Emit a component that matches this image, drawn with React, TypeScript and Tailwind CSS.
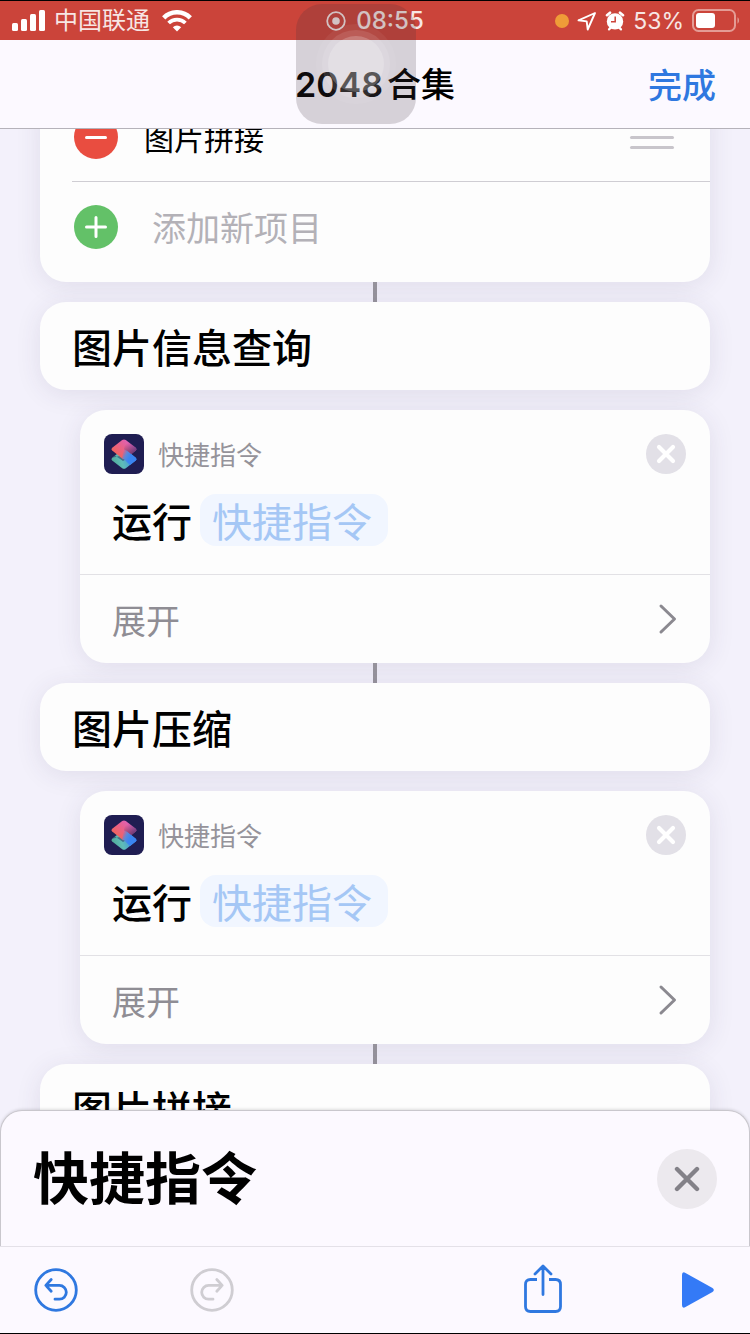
import { useState } from 'react'

const ACTIONS = ['图片信息查询', '图片压缩']

const CARD = 'rounded-[26px] bg-[#fdfdfd] shadow-[0_4px_26px_rgba(60,50,90,0.10)]'

function SignalIcon() {
  return (
    <svg width="34" height="22" viewBox="0 0 34 22" fill="#fff" aria-hidden="true">
      <rect x="0" y="13" width="6" height="8" rx="1.5" />
      <rect x="9" y="9" width="6" height="12" rx="1.5" />
      <rect x="18" y="4" width="6" height="17" rx="1.5" />
      <rect x="27" y="0" width="6" height="21" rx="1.5" />
    </svg>
  )
}

function WifiIcon() {
  return (
    <svg width="30" height="22" viewBox="0 0 30 22" fill="none" stroke="#fff" strokeWidth="4.6" aria-hidden="true">
      <path d="M1.7 7.8a18.8 18.8 0 0 1 26.6 0" />
      <path d="M6.600 13a12 12 0 0 1 16.800 0" strokeWidth="3.800" />
      <path d="M15 21.600l-4.200-4.300a6 6 0 0 1 8.400 0z" fill="#fff" stroke="none" />
    </svg>
  )
}

function RecordIcon() {
  return (
    <svg width="20" height="20" viewBox="0 0 20 20" aria-hidden="true">
      <circle cx="10" cy="10" r="8.8" fill="none" stroke="#f7e6e4" strokeWidth="1.8" />
      <circle cx="10" cy="10" r="3.8" fill="#f7e6e4" />
    </svg>
  )
}

function LocationIcon() {
  return (
    <svg width="20" height="20" viewBox="0 0 20 20" fill="none" stroke="#fff" strokeWidth="1.9" strokeLinejoin="round" aria-hidden="true">
      <path d="M18 2L1.5 9.3l8.2 1.1 1 8.1z" />
    </svg>
  )
}

function AlarmIcon() {
  return (
    <svg width="20" height="20" viewBox="0 0 20 20" aria-hidden="true">
      <g stroke="#fff" strokeWidth="2.6" strokeLinecap="round">
        <path d="M2 4.2L5 1.7M18 4.2L15 1.7" />
        <path d="M4 18.4l2-2M16 18.4l-2-2" strokeWidth="2.2" />
      </g>
      <circle cx="10" cy="10.4" r="8.2" fill="#fff" />
      <path d="M10.2 5.6v5.2H6" fill="none" stroke="#cc443a" strokeWidth="1.5" />
    </svg>
  )
}

function BatteryIcon() {
  return (
    <svg width="48" height="24" viewBox="0 0 48 24" aria-hidden="true">
      <rect x="1" y="1" width="42" height="21" rx="5.5" fill="none" stroke="#e49c95" strokeWidth="2" />
      <rect x="4" y="4" width="19" height="15" rx="3" fill="#fff" />
      <path d="M45.5 8.3c2 1.2 2 5.2 0 6.4z" fill="#e49c95" />
    </svg>
  )
}

function ShortcutsIcon() {
  return (
    <svg width="40" height="40" viewBox="0 0 40 40" aria-hidden="true">
      <defs>
        <linearGradient id="lower" gradientUnits="userSpaceOnUse" x1="8" y1="30" x2="32" y2="22">
          <stop offset="0" stopColor="#4fa896" />
          <stop offset="0.4" stopColor="#5fbcb8" />
          <stop offset="1" stopColor="#2f7bf0" />
        </linearGradient>
        <linearGradient id="upper" gradientUnits="userSpaceOnUse" x1="11" y1="19" x2="24" y2="5">
          <stop offset="0" stopColor="#f0645e" />
          <stop offset="0.5" stopColor="#e8608c" />
          <stop offset="1" stopColor="#dc62bc" />
        </linearGradient>
        <linearGradient id="shade" gradientUnits="userSpaceOnUse" x1="22" y1="10" x2="29" y2="20">
          <stop offset="0" stopColor="#3a2a66" stopOpacity="0" />
          <stop offset="1" stopColor="#3a2a66" stopOpacity="0.75" />
        </linearGradient>
        <linearGradient id="front" gradientUnits="userSpaceOnUse" x1="18" y1="19" x2="26" y2="23">
          <stop offset="0" stopColor="#6a80c8" stopOpacity="0" />
          <stop offset="0.5" stopColor="#5f88d8" />
          <stop offset="1" stopColor="#3a84f0" />
        </linearGradient>
      </defs>
      <rect width="40" height="40" rx="8" fill="#1f1d52" />
      <path d="M18.200 15.800q1.800-1.300 3.600 0l10 8q1.600 1.400 0 2.800l-10 7.600q-1.800 1.300-3.600 0l-10-7.600q-1.600-1.400 0-2.800z" fill="url(#lower)" />
      <path d="M8.200 23.800L11 21.500l8 5.500 5-3-4-3z" fill="#1f1d52" opacity="0.45" />
      <path d="M18.200 6.100q1.800-1.300 3.600 0l10 7.600q1.600 1.400 0 2.800l-10 8q-1.800 1.300-3.600 0l-10-8q-1.600-1.400 0-2.800z" fill="url(#upper)" />
      <path d="M21.800 6.100l10 7.600q1.600 1.400 0 2.800L27 20.300l-7-5z" fill="url(#shade)" />
      <path d="M20 15.200q1 0 1.800.6l10 8q1.600 1.400 0 2.800L26 31l-6-5.800-2-1z" fill="url(#front)" />
    </svg>
  )
}

function CircleArrow({ redo }: { redo?: boolean }) {
  return (
    <svg width="44" height="44" viewBox="0 0 44 44" fill="none" stroke="currentColor" strokeWidth="2.8" strokeLinecap="round" strokeLinejoin="round" aria-hidden="true">
      <circle cx="22" cy="22" r="20.3" />
      {redo ? (
        <path d="M26.8 11.5l5.4 5.900-5.400 5.900M32 17.400H18.600a6.900 6.900 0 0 0 0 13.800H23" />
      ) : (
        <path d="M17.200 11.500l-5.400 5.900 5.400 5.900M12 17.400h13.400a6.900 6.900 0 0 1 0 13.800H21" />
      )}
    </svg>
  )
}

function StatusBar() {
  return (
    <div className="grid h-10 shrink-0 grid-cols-[1fr_auto_1fr] items-center border-t border-black bg-[#cb443a] font-['Inter','Noto_Sans_CJK_SC',sans-serif] text-2xl leading-6 text-[#f7e6e4]">
      <div className="flex items-center gap-2 pl-3">
        <SignalIcon />
        <span className="mr-1">中国联通</span>
        <WifiIcon />
      </div>
      <div className="flex items-center gap-2.5">
        <RecordIcon />
        <span className="font-medium">08:55</span>
      </div>
      <div className="flex items-center justify-end gap-2 pr-2.5">
        <span className="size-3.5 rounded-full bg-[#ef9c38]" />
        <LocationIcon />
        <AlarmIcon />
        <span className="text-[23px]">53%</span>
        <BatteryIcon />
      </div>
    </div>
  )
}

function AssistiveTouch() {
  return (
    <div className="pointer-events-none absolute inset-x-0 top-1 z-20 flex justify-center pr-[38px]">
      <div className="flex size-[120px] items-center justify-center rounded-[26px] bg-[#40303a]/20">
        <div className="flex size-20 items-center justify-center rounded-full bg-white/5">
          <div className="flex size-[68px] items-center justify-center rounded-full bg-white/10">
            <div className="size-14 rounded-full bg-white/20" />
          </div>
        </div>
      </div>
    </div>
  )
}

function Connector() {
  return <div className="mx-auto h-5 w-1 bg-[#96939c]" />
}

function MenuTitle({ title }: { title: string }) {
  return (
    <div className={`${CARD} flex h-[88px] items-center px-8`}>
      <h2 className="text-[40px] leading-[56px] font-medium">{title}</h2>
    </div>
  )
}

function RunShortcutCard() {
  return (
    <div className={`${CARD} mt-5 ml-10`}>
      <div className="flex items-center px-6 pt-6">
        <ShortcutsIcon />
        <span className="ml-3.5 text-[26px] leading-10 text-[#95939a]">快捷指令</span>
        <button aria-label="删除" className="ml-auto flex size-10 items-center justify-center rounded-full bg-[#e2e0e7]">
          <svg width="20" height="20" viewBox="0 0 20 20" stroke="#fff" strokeWidth="4.2" strokeLinecap="round" aria-hidden="true">
            <path d="M3 3l14 14M17 3L3 17" />
          </svg>
        </button>
      </div>
      <div className="flex items-center gap-2 px-8 pt-5 pb-7 text-[40px] leading-[52px]">
        <span className="font-medium">运行</span>
        <button className="rounded-2xl bg-[#f1f6ff] pr-4 pl-3 text-[#a5c7f5]">快捷指令</button>
      </div>
      <button className="flex h-[89px] w-full items-center justify-between border-t border-[#e2e1e5] px-8 text-[34px] text-[#8f8d94]">
        <span>展开</span>
        <svg width="20" height="32" viewBox="0 0 20 32" fill="none" stroke="#8b8990" strokeWidth="3" strokeLinecap="round" strokeLinejoin="round" aria-hidden="true">
          <path d="M3 3l13.5 13L3 29" />
        </svg>
      </button>
    </div>
  )
}

export default function App() {
  const [item, setItem] = useState('图片拼接')
  const [newItem, setNewItem] = useState('')

  return (
    <div className="relative flex h-screen flex-col overflow-hidden border-b border-black bg-[#fcf9ff] font-['Noto_Sans_CJK_SC',sans-serif] text-black">
      <StatusBar />
      <AssistiveTouch />

      <header className="grid h-[89px] shrink-0 grid-cols-[1fr_auto_1fr] items-center border-b border-[#b5b2ba] px-[34px] text-[34px] leading-[48px]">
        <h1 className="col-start-2 font-medium">
          <span className="mr-1 font-['Inter',sans-serif] font-semibold">2048</span>合集
        </h1>
        <button className="justify-self-end font-medium text-[#2f78e0]">完成</button>
      </header>

      <main className="min-h-0 flex-1 overflow-hidden bg-[#f3f1fb] px-10">
        {/* menu items, scrolled under the header */}
        <section className={`${CARD} -mt-9 pb-2.5 pl-8`}>
          <div className="flex h-[89px] items-center border-b border-[#cfcdd3]">
            <button aria-label="移除" className="ml-0.5 flex size-11 items-center justify-center rounded-full bg-[#e94d40]">
              <span className="h-[3px] w-[22px] rounded-full bg-white" />
            </button>
            <input
              aria-label="项目"
              value={item}
              onChange={e => setItem(e.target.value)}
              className="ml-[26px] min-w-0 flex-1 text-3xl leading-10 outline-none"
            />
            <div className="mr-9 flex w-11 flex-col gap-[7px]">
              <span className="h-[3px] rounded-full bg-[#c8c5cb]" />
              <span className="h-[3px] rounded-full bg-[#c8c5cb]" />
              <span className="h-[3px] rounded-full bg-[#c8c5cb]" />
            </div>
          </div>
          <div className="flex h-[90px] items-center">
            <button aria-label="添加" className="ml-0.5 flex size-11 items-center justify-center rounded-full bg-[#63c168]">
              <svg width="22" height="22" viewBox="0 0 22 22" stroke="#fff" strokeWidth="3" strokeLinecap="round" aria-hidden="true">
                <path d="M11 1.5v19M1.500 11h19" />
              </svg>
            </button>
            <input
              aria-label="新项目"
              placeholder="添加新项目"
              value={newItem}
              onChange={e => setNewItem(e.target.value)}
              className="ml-[34px] min-w-0 flex-1 text-[34px] leading-[48px] outline-none placeholder:text-[#b3b1b7]"
            />
          </div>
        </section>

        {ACTIONS.map(title => (
          <div key={title}>
            <Connector />
            <MenuTitle title={title} />
            <RunShortcutCard />
          </div>
        ))}
        <Connector />
        <MenuTitle title="图片拼接" />
      </main>

      {/* action drawer, its round corners lie over the list */}
      <section className="relative -mt-6 flex h-[136px] shrink-0 items-center justify-between rounded-t-[22px] border border-b-0 border-[#c9c7cd] bg-[#fcf9ff] px-8 shadow-[0_-1px_3px_rgba(0,0,0,0.12)]">
        <h2 className="pb-2 text-[56px] leading-[72px] font-bold">快捷指令</h2>
        <button aria-label="关闭" className="flex size-15 items-center justify-center rounded-full bg-[#ece9ee]">
          <svg width="26" height="26" viewBox="0 0 26 26" stroke="#838188" strokeWidth="4.400" strokeLinecap="round" aria-hidden="true">
            <path d="M3 3l20 20M23 3L3 23" />
          </svg>
        </button>
      </section>

      <footer className="relative flex h-[87px] shrink-0 items-center justify-between border-t border-[#e4e1e8] bg-[#fcf9ff] pr-9 pl-[34px] text-[#2f78e0]">
        <div className="flex items-center gap-28">
          <button aria-label="撤销"><CircleArrow /></button>
          <button aria-label="重做" className="text-[#cfcdd2]"><CircleArrow redo /></button>
        </div>
        <div className="flex items-center gap-30">
          <button aria-label="共享">
            <svg width="38" height="52" viewBox="0 0 38 52" fill="none" stroke="currentColor" strokeWidth="2.8" strokeLinecap="round" strokeLinejoin="round" aria-hidden="true">
              <path d="M13 15.500H6.500q-5 0-5 5v22q0 5 5 5h25q5 0 5-5v-22q0-5-5-5H25" strokeLinecap="butt" />
              <path d="M19 30.500V2.500M11 10l8-8 8 8" />
            </svg>
          </button>
          <button aria-label="运行">
            <svg width="32" height="36" viewBox="0 0 32 36" fill="#347af6" aria-hidden="true">
              <path d="M0 3Q0-.8 3.500.9L30.500 16q2.600 2 0 4L3.500 35.100Q0 36.800 0 33z" />
            </svg>
          </button>
        </div>
      </footer>
    </div>
  )
}
